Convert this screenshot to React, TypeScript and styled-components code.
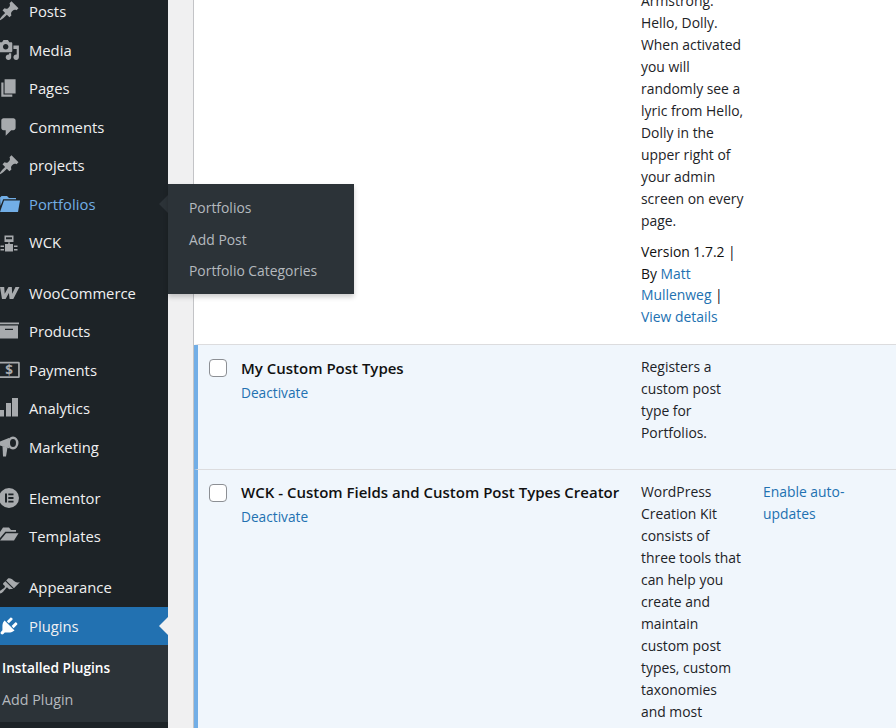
import React from "react";
import styled, { createGlobalStyle } from "styled-components";

const GlobalStyle = createGlobalStyle`
  html, body {
    margin: 0;
    height: 100%;
    overflow: hidden;
    background: #f0f0f1;
    font-family: "Open Sans", "Noto Sans", "Liberation Sans", sans-serif;
    font-size: 14px;
    color: #1d2327;
  }
`;

const Page = styled.div`
  display: flex;
  width: 896px;
  height: 728px;
  overflow: hidden;
`;

const Sidebar = styled.nav`
  position: relative;
  flex: 0 0 168px;
  background: #1d2327;
`;

const MenuList = styled.div`
  margin-top: -8px;
`;

const MenuItem = styled.div<{ $tone?: "link" | "current" }>`
  position: relative;
  display: flex;
  align-items: center;
  height: 38.5px;
  color: ${(p) => (p.$tone === "link" ? "#72aee6" : "#f0f0f1")};
  background: ${(p) => (p.$tone === "current" ? "#2271b1" : "transparent")};
  font-size: 14.8px;
  svg {
    flex: 0 0 22px;
    width: 22px;
    height: 22px;
    margin: 0 9px 0 -2px;
    fill: ${(p) => (p.$tone === "link" ? "#72aee6" : p.$tone === "current" ? "#ffffff" : "#a7aaad")};
  }
`;

const MenuGap = styled.div<{ $last?: boolean }>`
  height: ${(p) => (p.$last ? "12.8px" : "12.2px")};
`;

const Notch = styled.span<{ $color: string }>`
  position: absolute;
  right: 0;
  top: 50%;
  margin-top: -9px;
  border: 9px solid transparent;
  border-left-width: 0;
  border-right-color: ${(p) => p.$color};
`;

const SubMenu = styled.div`
  display: flex;
  flex-direction: column;
  height: 77px;
  padding-top: 7px;
  box-sizing: border-box;
  background: #2c3338;
`;

const SubItem = styled.div<{ $current?: boolean }>`
  height: 32px;
  line-height: 32px;
  padding-left: 2px;
  font-size: ${(p) => (p.$current ? "13.7px" : "14.3px")};
  font-weight: ${(p) => (p.$current ? 600 : 400)};
  color: ${(p) => (p.$current ? "#ffffff" : "#b4b9be")};
`;

const Flyout = styled.div`
  position: absolute;
  left: 168px;
  top: 184px;
  width: 186px;
  height: 110px;
  padding: 8px 0 0 21px;
  box-sizing: border-box;
  background: #2c3338;
  box-shadow: 0 3px 5px rgba(0, 0, 0, 0.2);
  z-index: 2;
`;

const FlyoutItem = styled.div`
  height: 31.5px;
  line-height: 31.5px;
  font-size: 13.9px;
  color: #b4b9be;
  white-space: nowrap;
`;

const Gutter = styled.div`
  flex: 0 0 25px;
  background: #f0f0f1;
`;

const Table = styled.main`
  flex: 1;
  min-width: 0;
  border-left: 1px solid #c3c4c7;
  background: #fff;
`;

const Row = styled.section<{ $active?: boolean; $height: number }>`
  display: grid;
  grid-template-columns: 43px 400px 122px 1fr;
  height: ${(p) => p.$height}px;
  box-sizing: border-box;
  overflow: hidden;
  border-left: 4px solid ${(p) => (p.$active ? "#72aee6" : "#fff")};
  border-bottom: 1px solid #dcdcde;
  background: ${(p) => (p.$active ? "#f0f6fc" : "#fff")};
`;

const CheckCell = styled.div`
  padding: 14px 0 0 11px;
`;

const Check = styled.span`
  display: block;
  width: 18px;
  height: 18px;
  box-sizing: border-box;
  border: 1px solid #8c8f94;
  border-radius: 4px;
  background: #fff;
`;

const PluginCell = styled.div<{ $top: number }>`
  padding-top: ${(p) => p.$top}px;
`;

const PluginName = styled.div`
  font-size: 15px;
  font-weight: 600;
  line-height: 24px;
  color: #111;
  white-space: nowrap;
`;

const RowAction = styled.a`
  display: block;
  margin-top: 1px;
  line-height: 23.5px;
  font-size: 13.7px;
  color: #2271b1;
`;

const DescCell = styled.div<{ $top?: number }>`
  padding-top: ${(p) => p.$top ?? 11}px;
  line-height: 22px;
  font-size: 13.9px;
  color: #1d2327;
  margin-top: ${(p) => (p.$top === 0 ? "-10px" : "0")};
`;

const Meta = styled.p`
  margin: 9px 0 0;
  line-height: 21.7px;
  color: #111;
`;

const TextLink = styled.a`
  color: #2271b1;
`;

const Icons = {
  pin: <svg viewBox="0 0 20 20"><path d="M10.44 3.02l1.82-1.82 6.36 6.35-1.83 1.82c-1.05-.68-2.48-.57-3.41.36l-.75.75c-.92.93-1.04 2.35-.35 3.41l-1.83 1.82-2.41-2.41-2.8 2.79c-.42.42-3.38 2.71-3.8 2.29s1.86-3.39 2.28-3.81l2.79-2.79L4.1 9.36l1.83-1.82c1.05.69 2.48.57 3.4-.36l.75-.75c.93-.92 1.05-2.35.36-3.41z" /></svg>,
  media: <svg viewBox="0 0 20 20"><path d="M13 11V4c0-.55-.45-1-1-1h-1.67L9 1H5L3.67 3H2c-.55 0-1 .45-1 1v7c0 .55.45 1 1 1h10c.55 0 1-.45 1-1zM7 4.5c1.38 0 2.5 1.12 2.5 2.5S8.38 9.5 7 9.5 4.5 8.38 4.5 7 5.62 4.5 7 4.5zM14 6h5v10.5c0 1.38-1.12 2.5-2.5 2.5S14 17.88 14 16.5s1.12-2.5 2.5-2.5c.17 0 .34.02.5.05V9h-3V6zm-4 8.05V13h2v3.5c0 1.38-1.12 2.5-2.5 2.5S7 17.88 7 16.5 8.12 14 9.5 14c.17 0 .34.02.5.05z" /></svg>,
  page: <svg viewBox="0 0 20 20"><path d="M6 15V2h10v13H6zm-1 1h8v2H3V5h2v11z" /></svg>,
  comment: <svg viewBox="0 0 20 20"><path d="M5 2h9c1.1 0 2 .9 2 2v7c0 1.1-.9 2-2 2h-2l-5 5v-5H5c-1.1 0-2-.9-2-2V4c0-1.1.9-2 2-2z" /></svg>,
  folder: <svg viewBox="0 0 22 22"><path d="M6 7.500H22L20 19H2z" /><path d="M2 4.500L3.500 3H9L11 5H18V6.300H5.200L2.500 13z" /></svg>,
  robot: <svg viewBox="0 0 22 22"><path fillRule="evenodd" d="M6.500 4.500H15.500V11H6.500zM8 6.300V8.300H14V6.300zM10 11.500H12V12.800H10zM7 13H15V20.500H7zM2.500 14.500H6V16H2.500zM16 14.500H19.500V16H16zM2.500 18H6V19.500H2.500zM16 18H19.500V19.500H16z" /></svg>,
  woo: <svg viewBox="0 0 22 22"><path d="M2 5H6.200L6.700 11.800L10.500 5H13.800L14.200 11.800L17.500 5H21.500L15.300 17H11.600L10.900 11L7.600 17H4z" /></svg>,
  box: <svg viewBox="0 0 22 22"><path fillRule="evenodd" d="M2 2.500H21V4.300H2zM2 5.500H20V18.500H2zM7 8.700V10H15V8.700z" /></svg>,
  payment: <svg viewBox="0 0 22 22"><path d="M2 2.700H20.500a1.300 1.300 0 0 1 1.300 1.300V17.700a1.300 1.300 0 0 1-1.300 1.300H2V17.300H20.100V4.400H2z" /><text x="11" y="15.500" fontFamily="Open Sans, sans-serif" fontSize="13.500" fontWeight="700" textAnchor="middle">$</text></svg>,
  bars: <svg viewBox="0 0 22 22"><path d="M2 13H6V19.500H2zM8 6H13V19.500H8zM14 1H20V19.500H14z" /></svg>,
  megaphone: <svg viewBox="0 0 22 22"><path d="M2 5.500L11.500 1.800Q9.300 7 11.500 12.500L2 9.500z" /><path d="M4.500 10L9.500 11.500L8 20.500H5z" /><path fillRule="evenodd" d="M15 .5a5.500 6.500 0 1 0 0 13a5.500 6.500 0 1 0 0-13zM15 3a3 4 0 1 1 0 8a3 4 0 1 1 0-8z" /></svg>,
  elementor: <svg viewBox="0 0 22 22"><path fillRule="evenodd" d="M11 1a10 10 0 1 0 0 20A10 10 0 0 0 11 1zM7 6.500H9V15.500H7zM10.300 6.500H15.500V8.200H10.300zM10.300 10.100H15.500V11.900H10.300zM10.300 13.800H15.500V15.500H10.300z" /></svg>,
  openFolder: <svg viewBox="0 0 22 22"><path d="M8 8.300H20.500L16 15.500H2z" /><path d="M2 7L5 2.500H11L13 5H18V6.800H7.300L2 13z" /></svg>,
  brush: <svg viewBox="0 0 20 20"><path d="M14.480 11.060L7.410 3.990l1.500-1.500c.5-.56 2.300-.47 3.510.32 1.210.8 1.430 1.280 2.910 2.100 1.180.64 2.450 1.260 4.450.85zm-.71.71L6.700 4.700 4.930 6.470c-.39.39-.39 1.020 0 1.410l1.060 1.060c.39.39.39 1.030 0 1.420-.6.600-1.430 1.110-2.210 1.690-.35.26-.7.530-1.010.84C1.430 13.230.4 14.800 1.200 15.600c.79.79 2.360-.24 3.700-1.570.31-.31.58-.66.85-1.020.58-.78 1.080-1.610 1.690-2.210.39-.39 1.020-.39 1.410 0l1.060 1.060c.39.39 1.020.39 1.410 0z" /></svg>,
  plug: <svg viewBox="0 0 20 20"><path d="M13.110 4.360L9.870 7.600 8 5.730l3.240-3.240c.35-.34 1.050-.2 1.560.32.52.51.66 1.210.31 1.550zm-8 1.770l.91-1.120 9.010 9.010-1.190.84c-.71.71-2.630 1.160-3.820 1.160H6.140L4.900 17.260c-.59.590-1.540.590-2.120 0-.59-.58-.59-1.530 0-2.120l1.240-1.240v-3.880c0-1.130.4-3.190 1.090-3.890zm7.260 3.970l3.240-3.240c.34-.35 1.040-.21 1.550.31.52.51.66 1.210.31 1.550l-3.240 3.250z" /></svg>,
};

const groups: { icon: React.ReactNode; label: string; tone?: "link" }[][] = [
  [
    { icon: Icons.pin, label: "Posts" },
    { icon: Icons.media, label: "Media" },
    { icon: Icons.page, label: "Pages" },
    { icon: Icons.comment, label: "Comments" },
    { icon: Icons.pin, label: "projects" },
    { icon: Icons.folder, label: "Portfolios", tone: "link" },
    { icon: Icons.robot, label: "WCK" },
  ],
  [
    { icon: Icons.woo, label: "WooCommerce" },
    { icon: Icons.box, label: "Products" },
    { icon: Icons.payment, label: "Payments" },
    { icon: Icons.bars, label: "Analytics" },
    { icon: Icons.megaphone, label: "Marketing" },
  ],
  [
    { icon: Icons.elementor, label: "Elementor" },
    { icon: Icons.openFolder, label: "Templates" },
  ],
];

const lines = (items: string[]) =>
  items.map((text) => (
    <React.Fragment key={text}>
      {text}
      <br />
    </React.Fragment>
  ));

export default function App() {
  return (
    <Page>
      <GlobalStyle />
      <Sidebar>
        <MenuList>
          {groups.map((group, i) => (
            <React.Fragment key={i}>
              {group.map((item) => (
                <MenuItem key={item.label} $tone={item.tone}>
                  {item.icon}
                  {item.label}
                  {item.tone === "link" && <Notch $color="#2c3338" />}
                </MenuItem>
              ))}
              <MenuGap $last={i === groups.length - 1} />
            </React.Fragment>
          ))}
          <MenuItem>
            {Icons.brush}
            Appearance
          </MenuItem>
          <MenuItem $tone="current">
            {Icons.plug}
            Plugins
            <Notch $color="#f0f0f1" />
          </MenuItem>
          <SubMenu>
            <SubItem $current>Installed Plugins</SubItem>
            <SubItem>Add Plugin</SubItem>
          </SubMenu>
        </MenuList>
        <Flyout>
          <FlyoutItem>Portfolios</FlyoutItem>
          <FlyoutItem>Add Post</FlyoutItem>
          <FlyoutItem>Portfolio Categories</FlyoutItem>
        </Flyout>
      </Sidebar>
      <Gutter />
      <Table>
        <Row $height={345}>
          <div />
          <div />
          <DescCell $top={0}>
            {lines([
              "Armstrong.",
              "Hello, Dolly.",
              "When activated",
              "you will",
              "randomly see a",
              "lyric from Hello,",
              "Dolly in the",
              "upper right of",
              "your admin",
              "screen on every",
              "page.",
            ])}
            <Meta>
              Version 1.7.2 |
              <br />
              By <TextLink>Matt</TextLink>
              <br />
              <TextLink>Mullenweg</TextLink> |
              <br />
              <TextLink>View details</TextLink>
            </Meta>
          </DescCell>
          <div />
        </Row>
        <Row $active $height={125}>
          <CheckCell>
            <Check />
          </CheckCell>
          <PluginCell $top={11}>
            <PluginName>My Custom Post Types</PluginName>
            <RowAction>Deactivate</RowAction>
          </PluginCell>
          <DescCell>{lines(["Registers a", "custom post", "type for", "Portfolios."])}</DescCell>
          <div />
        </Row>
        <Row $active $height={300}>
          <CheckCell>
            <Check />
          </CheckCell>
          <PluginCell $top={10}>
            <PluginName>WCK - Custom Fields and Custom Post Types Creator</PluginName>
            <RowAction>Deactivate</RowAction>
          </PluginCell>
          <DescCell>
            {lines([
              "WordPress",
              "Creation Kit",
              "consists of",
              "three tools that",
              "can help you",
              "create and",
              "maintain",
              "custom post",
              "types, custom",
              "taxonomies",
              "and most",
            ])}
          </DescCell>
          <DescCell>
            <TextLink>
              Enable auto-
              <br />
              updates
            </TextLink>
          </DescCell>
        </Row>
      </Table>
    </Page>
  );
}
